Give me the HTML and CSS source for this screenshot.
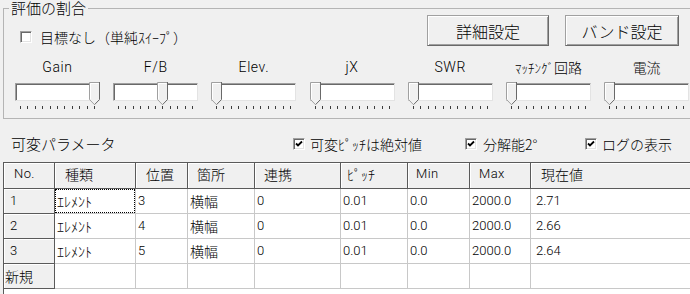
FILE: index.html
```html
<!DOCTYPE html>
<html lang="ja">
<head>
<meta charset="utf-8">
<title>評価の割合</title>
<link rel="stylesheet" href="styles.css">
</head>
<body>
<main class="win">
  <fieldset class="group">
    <legend class="group-title">評価の割合</legend>
    <div class="top-row">
      <label class="chk chk-main"><span class="box"></span><span>目標なし（単純ｽｲｰﾌﾟ）</span></label>
      <button class="btn btn-detail">詳細設定</button>
      <button class="btn btn-band">バンド設定</button>
    </div>
    <div class="sliders">
      <div class="slider">
        <div class="slabel lat">Gain</div>
        <div class="track"><svg class="thumb" style="left:73px" width="11" height="24" viewBox="0 0 11 24"><path d="M0 0H11V17.5L5.5 23L0 17.5Z" fill="#f0f0f0"/><path d="M0.5 17.5V0.5H10.5" fill="none" stroke="#a0a0a0"/><path d="M1.5 17V1.5H9.5" fill="none" stroke="#fff"/><path d="M10.5 0V17.5L5.5 22.7" fill="none" stroke="#696969"/><path d="M0.5 17.5L5.5 22.7" fill="none" stroke="#a0a0a0"/></svg></div>
        <svg class="ticks" width="76" height="3" viewBox="0 0 76 3"><path d="M0.5 0V3M7.5 0V3M15.5 0V3M22.5 0V3M30.5 0V3M37.5 0V3M44.5 0V3M52.5 0V3M59.5 0V3M67.5 0V3M74.5 0V3" stroke="#3c3c3c" shape-rendering="crispEdges"/></svg>
      </div>
      <div class="slider">
        <div class="slabel lat">F/B</div>
        <div class="track"><svg class="thumb" style="left:43px" width="11" height="24" viewBox="0 0 11 24"><path d="M0 0H11V17.5L5.5 23L0 17.5Z" fill="#f0f0f0"/><path d="M0.5 17.5V0.5H10.5" fill="none" stroke="#a0a0a0"/><path d="M1.5 17V1.5H9.5" fill="none" stroke="#fff"/><path d="M10.5 0V17.5L5.5 22.7" fill="none" stroke="#696969"/><path d="M0.5 17.5L5.5 22.7" fill="none" stroke="#a0a0a0"/></svg></div>
        <svg class="ticks" width="76" height="3" viewBox="0 0 76 3"><path d="M0.5 0V3M7.5 0V3M15.5 0V3M22.5 0V3M30.5 0V3M37.5 0V3M44.5 0V3M52.5 0V3M59.5 0V3M67.5 0V3M74.5 0V3" stroke="#3c3c3c" shape-rendering="crispEdges"/></svg>
      </div>
      <div class="slider">
        <div class="slabel lat">Elev.</div>
        <div class="track"><svg class="thumb" style="left:-1px" width="11" height="24" viewBox="0 0 11 24"><path d="M0 0H11V17.5L5.5 23L0 17.5Z" fill="#f0f0f0"/><path d="M0.5 17.5V0.5H10.5" fill="none" stroke="#a0a0a0"/><path d="M1.5 17V1.5H9.5" fill="none" stroke="#fff"/><path d="M10.5 0V17.5L5.5 22.7" fill="none" stroke="#696969"/><path d="M0.5 17.5L5.5 22.7" fill="none" stroke="#a0a0a0"/></svg></div>
        <svg class="ticks" width="76" height="3" viewBox="0 0 76 3"><path d="M0.5 0V3M7.5 0V3M15.5 0V3M22.5 0V3M30.5 0V3M37.5 0V3M44.5 0V3M52.5 0V3M59.5 0V3M67.5 0V3M74.5 0V3" stroke="#3c3c3c" shape-rendering="crispEdges"/></svg>
      </div>
      <div class="slider">
        <div class="slabel lat">jX</div>
        <div class="track"><svg class="thumb" style="left:-1px" width="11" height="24" viewBox="0 0 11 24"><path d="M0 0H11V17.5L5.5 23L0 17.5Z" fill="#f0f0f0"/><path d="M0.5 17.5V0.5H10.5" fill="none" stroke="#a0a0a0"/><path d="M1.5 17V1.5H9.5" fill="none" stroke="#fff"/><path d="M10.5 0V17.5L5.5 22.7" fill="none" stroke="#696969"/><path d="M0.5 17.5L5.5 22.7" fill="none" stroke="#a0a0a0"/></svg></div>
        <svg class="ticks" width="76" height="3" viewBox="0 0 76 3"><path d="M0.5 0V3M7.5 0V3M15.5 0V3M22.5 0V3M30.5 0V3M37.5 0V3M44.5 0V3M52.5 0V3M59.5 0V3M67.5 0V3M74.5 0V3" stroke="#3c3c3c" shape-rendering="crispEdges"/></svg>
      </div>
      <div class="slider">
        <div class="slabel lat">SWR</div>
        <div class="track"><svg class="thumb" style="left:-1px" width="11" height="24" viewBox="0 0 11 24"><path d="M0 0H11V17.5L5.5 23L0 17.5Z" fill="#f0f0f0"/><path d="M0.5 17.5V0.5H10.5" fill="none" stroke="#a0a0a0"/><path d="M1.5 17V1.5H9.5" fill="none" stroke="#fff"/><path d="M10.5 0V17.5L5.5 22.7" fill="none" stroke="#696969"/><path d="M0.5 17.5L5.5 22.7" fill="none" stroke="#a0a0a0"/></svg></div>
        <svg class="ticks" width="76" height="3" viewBox="0 0 76 3"><path d="M0.5 0V3M7.5 0V3M15.5 0V3M22.5 0V3M30.5 0V3M37.5 0V3M44.5 0V3M52.5 0V3M59.5 0V3M67.5 0V3M74.5 0V3" stroke="#3c3c3c" shape-rendering="crispEdges"/></svg>
      </div>
      <div class="slider">
        <div class="slabel"><span class="hw">ﾏｯﾁﾝｸﾞ</span>回路</div>
        <div class="track"><svg class="thumb" style="left:-1px" width="11" height="24" viewBox="0 0 11 24"><path d="M0 0H11V17.5L5.5 23L0 17.5Z" fill="#f0f0f0"/><path d="M0.5 17.5V0.5H10.5" fill="none" stroke="#a0a0a0"/><path d="M1.5 17V1.5H9.5" fill="none" stroke="#fff"/><path d="M10.5 0V17.5L5.5 22.7" fill="none" stroke="#696969"/><path d="M0.5 17.5L5.5 22.7" fill="none" stroke="#a0a0a0"/></svg></div>
        <svg class="ticks" width="76" height="3" viewBox="0 0 76 3"><path d="M0.5 0V3M7.5 0V3M15.5 0V3M22.5 0V3M30.5 0V3M37.5 0V3M44.5 0V3M52.5 0V3M59.5 0V3M67.5 0V3M74.5 0V3" stroke="#3c3c3c" shape-rendering="crispEdges"/></svg>
      </div>
      <div class="slider">
        <div class="slabel">電流</div>
        <div class="track"><svg class="thumb" style="left:-1px" width="11" height="24" viewBox="0 0 11 24"><path d="M0 0H11V17.5L5.5 23L0 17.5Z" fill="#f0f0f0"/><path d="M0.5 17.5V0.5H10.5" fill="none" stroke="#a0a0a0"/><path d="M1.5 17V1.5H9.5" fill="none" stroke="#fff"/><path d="M10.5 0V17.5L5.5 22.7" fill="none" stroke="#696969"/><path d="M0.5 17.5L5.5 22.7" fill="none" stroke="#a0a0a0"/></svg></div>
        <svg class="ticks" width="76" height="3" viewBox="0 0 76 3"><path d="M0.5 0V3M7.5 0V3M15.5 0V3M22.5 0V3M30.5 0V3M37.5 0V3M44.5 0V3M52.5 0V3M59.5 0V3M67.5 0V3M74.5 0V3" stroke="#3c3c3c" shape-rendering="crispEdges"/></svg>
      </div>
    </div>
  </fieldset>

  <div class="param-row">
    <div class="param-title">可変パラメータ</div>
    <label class="chk chk-abs"><span class="box"><svg class="tick" width="8" height="8" viewBox="0 0 8 8"><path d="M1 3.5L3 5.5L7 1.5" fill="none" stroke="#000" stroke-width="1.8"/></svg></span><span>可変ﾋﾟｯﾁは絶対値</span></label>
    <label class="chk chk-res"><span class="box"><svg class="tick" width="8" height="8" viewBox="0 0 8 8"><path d="M1 3.5L3 5.5L7 1.5" fill="none" stroke="#000" stroke-width="1.8"/></svg></span><span>分解能2°</span></label>
    <label class="chk chk-log"><span class="box"><svg class="tick" width="8" height="8" viewBox="0 0 8 8"><path d="M1 3.5L3 5.5L7 1.5" fill="none" stroke="#000" stroke-width="1.8"/></svg></span><span>ログの表示</span></label>
  </div>

  <div class="grid">
    <div class="c fx h lat-h">No.</div>
    <div class="c fx h">種類</div>
    <div class="c fx h">位置</div>
    <div class="c fx h h9">箇所</div>
    <div class="c fx h h9">連携</div>
    <div class="c fx h h6">ﾋﾟｯﾁ</div>
    <div class="c fx h lat-h h8">Min</div>
    <div class="c fx h lat-h h9">Max</div>
    <div class="c fx h">現在値</div>

    <div class="c fx no n">1</div>
    <div class="c focus"><span>ｴﾚﾒﾝﾄ</span></div>
    <div class="c n">3</div>
    <div class="c">横幅</div>
    <div class="c n">0</div>
    <div class="c n">0.01</div>
    <div class="c n">0.0</div>
    <div class="c n">2000.0</div>
    <div class="c n last">2.71</div>

    <div class="c fx no n">2</div>
    <div class="c">ｴﾚﾒﾝﾄ</div>
    <div class="c n">4</div>
    <div class="c">横幅</div>
    <div class="c n">0</div>
    <div class="c n">0.01</div>
    <div class="c n">0.0</div>
    <div class="c n">2000.0</div>
    <div class="c n last">2.66</div>

    <div class="c fx no n">3</div>
    <div class="c">ｴﾚﾒﾝﾄ</div>
    <div class="c n">5</div>
    <div class="c">横幅</div>
    <div class="c n">0</div>
    <div class="c n">0.01</div>
    <div class="c n">0.0</div>
    <div class="c n">2000.0</div>
    <div class="c n last">2.64</div>

    <div class="c fx new">新規</div>
    <div class="c"></div>
    <div class="c"></div>
    <div class="c"></div>
    <div class="c"></div>
    <div class="c"></div>
    <div class="c"></div>
    <div class="c"></div>
    <div class="c"></div>
  </div>
</main>
</body>
</html>
```

FILE: styles.css
```css
* { box-sizing: border-box; }

html, body {
  margin: 0;
  padding: 0;
  overflow: hidden;
}

body {
  width: 690px;
  height: 294px;
  background: #f0f0f0;
  color: #000;
  font-family: "Noto Sans CJK JP", sans-serif;
  font-weight: 300;
  font-size: 14px;
}

.win {
  width: 690px;
  height: 294px;
  overflow: hidden;
}

/* ---------- group box ---------- */
.group {
  margin: 0 0 0 3px;
  padding: 0 0 9px 0;
  border: 1px solid #b4b4b4;
  width: 760px;
  min-width: 0;
}

.group-title {
  margin-left: 5px;
  padding: 0 2px;
  font-size: 15px;
  line-height: 16px;
}

.top-row {
  display: flex;
  align-items: flex-start;
  padding-left: 16px;
  height: 31px;
  margin-top: -1px;
}

.chk {
  display: flex;
  align-items: center;
  gap: 8px;
  line-height: 16px;
  white-space: nowrap;
}

.box {
  width: 12px;
  height: 12px;
  flex: 0 0 12px;
  display: flex;
  align-items: center;
  justify-content: center;
  background: #fff;
  border: 1px solid;
  border-color: #a0a0a0 #fff #fff #a0a0a0;
  box-shadow: inset 1px 1px #696969, inset -1px -1px #e3e3e3;
}

.tick { display: block; }

.chk-main {
  width: 407px;
  margin-top: 14px;
  font-size: 14px;
}

.btn {
  height: 31px;
  padding: 0;
  font-family: "Noto Sans CJK JP", sans-serif;
  font-weight: 300;
  font-size: 16px;
  line-height: 20px;
  color: #000;
  background: #f0f0f0;
  border: 1px solid;
  border-color: #a0a0a0 #696969 #696969 #a0a0a0;
  box-shadow: inset 1px 1px #fff, inset -1px -1px #a0a0a0;
}

.btn-detail { width: 122px; }
.btn-band { width: 114px; margin-left: 16px; }

/* ---------- sliders ---------- */
.sliders {
  display: grid;
  grid-template-columns: repeat(7, 85px);
  column-gap: 13.2px;
  padding-left: 11px;
  margin-top: 13px;
}

.slider {
  display: flex;
  flex-direction: column;
}

.slabel {
  height: 16px;
  line-height: 16px;
  text-align: center;
  white-space: nowrap;
  font-size: 14px;
}

.lat {
  font-family: "Roboto", "Liberation Sans", sans-serif;
  font-weight: 300;
  letter-spacing: 0.6px;
}

.hw { font-size: 13px; }

.track {
  position: relative;
  height: 18px;
  margin-top: 8px;
  background: #fff;
  border: 1px solid;
  border-color: #a0a0a0 #e3e3e3 #e3e3e3 #a0a0a0;
  box-shadow: inset 1px 1px #696969;
}

.thumb {
  position: absolute;
  top: -2px;
  display: block;
}

.ticks {
  display: block;
  margin: 5px 0 0 5px;
}

/* ---------- parameter row ---------- */
.param-row {
  display: flex;
  align-items: center;
  height: 18px;
  margin-top: 16px;
  padding-left: 11px;
}

.param-title {
  width: 282px;
  font-size: 15px;
  line-height: 18px;
}

.chk-abs { width: 172px; gap: 5px; }
.chk-res { width: 120px; gap: 6px; }
.chk-log { gap: 5px; }

/* ---------- string grid ---------- */
.grid {
  margin: 9px 0 0 3px;
  border-left: 1px solid #5a5a5a;
  border-top: 1px solid #5a5a5a;
  background: #fff;
  display: grid;
  grid-template-columns: 51px 81px 52px 67px 86px 67px 62px 61px 200px;
  grid-template-rows: 26px repeat(4, 25px);
  align-content: start;
  height: 150px;
  width: 730px;
}

.c {
  display: flex;
  align-items: center;
  padding-left: 2px;
  border-right: 1px solid #c8c8c8;
  border-bottom: 1px solid #c8c8c8;
  white-space: nowrap;
  overflow: hidden;
  line-height: 16px;
  font-size: 14px;
}

.fx {
  background: #f0f0f0;
  border-right-color: #5a5a5a;
  border-bottom-color: #5a5a5a;
  box-shadow: inset 1px 1px #fff;
}

.h {
  padding-left: 10px;
  padding-bottom: 3px;
}

.h9 { padding-left: 9px; }
.h8 { padding-left: 8px; }
.h6 { padding-left: 6px; }

.lat-h {
  font-family: "Roboto", "Liberation Sans", sans-serif;
  font-weight: 300;
  font-size: 13px;
  letter-spacing: 0.4px;
}

.n {
  font-family: "Roboto", "Liberation Sans", sans-serif;
  font-weight: 300;
  font-size: 13px;
}

.no { padding-left: 6px; }
.new { padding-left: 1px; }
.last { padding-left: 5px; }

.focus { padding: 0; }

.focus > span {
  flex: 1;
  align-self: stretch;
  display: flex;
  align-items: center;
  padding-left: 1px;
  border: 1px dotted #000;
}
```
